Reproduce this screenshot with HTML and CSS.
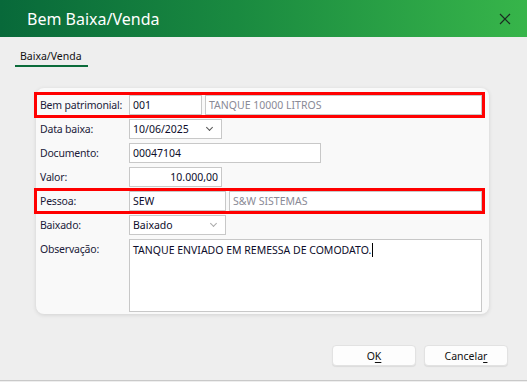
FILE: index.html
```html
<!DOCTYPE html>
<html lang="pt-BR">
<head>
    <meta charset="UTF-8">
    <meta name="viewport" content="width=device-width, initial-scale=1.0">
    <title>Bem Baixa/Venda</title>
    <link rel="stylesheet" href="styles.css">
</head>
<body>
    <div class="window">
        <div class="titlebar">
            <span class="title">Bem Baixa/Venda</span>
            <button class="close" aria-label="Fechar">
                <svg width="12" height="12" viewBox="0 0 12 12">
                    <path d="M1 1 L11 11 M11 1 L1 11" stroke="#1b2b22" stroke-width="1.2" fill="none"/>
                </svg>
            </button>
        </div>

        <div class="tabs">
            <span class="tab active">Baixa/Venda</span>
        </div>

        <div class="panel">
            <div class="row highlight">
                <label>Bem patrimonial:</label>
                <div class="fields">
                    <div class="input w-code">001</div>
                    <div class="input readonly grow">TANQUE 10000 LITROS</div>
                </div>
            </div>
            <div class="row">
                <label>Data baixa:</label>
                <div class="fields">
                    <div class="input select w-date">10/06/2025<span class="chev dark"></span></div>
                </div>
            </div>
            <div class="row">
                <label>Documento:</label>
                <div class="fields">
                    <div class="input w-doc">00047104</div>
                </div>
            </div>
            <div class="row">
                <label>Valor:</label>
                <div class="fields">
                    <div class="input w-date right">10.000,00</div>
                </div>
            </div>
            <div class="row highlight">
                <label>Pessoa:</label>
                <div class="fields">
                    <div class="input w-person">SEW</div>
                    <div class="input readonly grow">S&amp;W SISTEMAS</div>
                </div>
            </div>
            <div class="row">
                <label>Baixado:</label>
                <div class="fields">
                    <div class="input select w-person">Baixado<span class="chev"></span></div>
                </div>
            </div>
            <div class="row tall">
                <label>Observação:</label>
                <div class="fields">
                    <div class="input area grow">TANQUE ENVIADO EM REMESSA DE COMODATO.<span class="caret"></span></div>
                </div>
            </div>
        </div>

        <div class="footer">
            <button class="btn">O<u>K</u></button>
            <button class="btn">Cancela<u>r</u></button>
        </div>
    </div>
</body>
</html>
```

FILE: styles.css
```css
* {
    box-sizing: border-box;
}

body {
    margin: 0;
    font-family: "Noto Sans", "Open Sans", sans-serif;
    font-size: 10.5px;
    color: #1b1b3a;
    background: #eeeeee;
}

.window {
    width: 527px;
    height: 381px;
    border-bottom: 1px solid #c9c9c9;
    background: #eeeeee;
}

.titlebar {
    height: 37px;
    display: flex;
    align-items: center;
    justify-content: space-between;
    padding: 0 16px 0 27px;
    background: linear-gradient(90deg, #08693a 0%, #1a8a40 45%, #37b54a 100%);
}

.titlebar .title {
    color: #fff;
    font-size: 16px;
}

.close {
    background: transparent;
    border: none;
    padding: 0;
    display: flex;
    cursor: pointer;
}

.tabs {
    height: 51px;
    padding: 12px 0 0 15px;
}

.tab {
    display: inline-block;
    padding: 0 6px 0 5px;
    height: 18px;
    color: #111;
}

.tab.active {
    border-bottom: 2px solid #0b6b3a;
}

.panel {
    width: 453px;
    margin-left: 36px;
    padding: 7px 7px 2px 1px;
    background: #f9f9f9;
    border-radius: 8px;
    box-shadow: 0 1px 4px rgba(0, 0, 0, 0.12);
    display: flex;
    flex-direction: column;
    gap: 4px;
}

.row {
    display: grid;
    grid-template-columns: 89px 1fr;
    align-items: center;
    height: 20px;
    padding-left: 3px;
}

.row label {
    white-space: nowrap;
    letter-spacing: -0.2px;
}

.row.highlight {
    outline: 3px solid #ff0000;
}

.row.tall {
    height: 73px;
    align-items: start;
}

.row.tall label {
    padding-top: 3px;
}

.fields {
    display: flex;
    gap: 3px;
    height: 100%;
}

.input {
    height: 100%;
    background: #fff;
    border: 1px solid #c8c8c8;
    padding: 0 3px;
    display: flex;
    align-items: center;
    color: #0d0d2b;
    white-space: nowrap;
    position: relative;
}

.input.readonly {
    color: #8a8a96;
}

.input.right {
    justify-content: flex-end;
}

.input.area {
    align-items: flex-start;
    padding-top: 3px;
}

.grow {
    flex: 1;
}

.w-code {
    width: 73px;
}

.w-date {
    width: 93px;
}

.w-doc {
    width: 192px;
}

.w-person {
    width: 97px;
}

.chev {
    position: absolute;
    right: 9px;
    top: 5px;
    width: 5px;
    height: 5px;
    border-right: 1.5px solid #aaaaaa;
    border-bottom: 1.5px solid #aaaaaa;
    transform: rotate(45deg);
}

.chev.dark {
    border-color: #555;
}

.caret {
    display: inline-block;
    width: 1px;
    height: 14px;
    background: #000;
    margin-left: 1px;
}

.footer {
    display: flex;
    justify-content: flex-end;
    gap: 8px;
    padding: 31px 19px 0 0;
}

.btn {
    width: 84px;
    height: 21px;
    font-family: inherit;
    font-size: 10.5px;
    color: #111;
    background: #fdfdfd;
    border: 1px solid #e2e2e2;
    border-radius: 4px;
    box-shadow: 0 1px 1px rgba(0, 0, 0, 0.08);
    padding: 0;
}

.btn u {
    text-underline-offset: 2px;
}
```
